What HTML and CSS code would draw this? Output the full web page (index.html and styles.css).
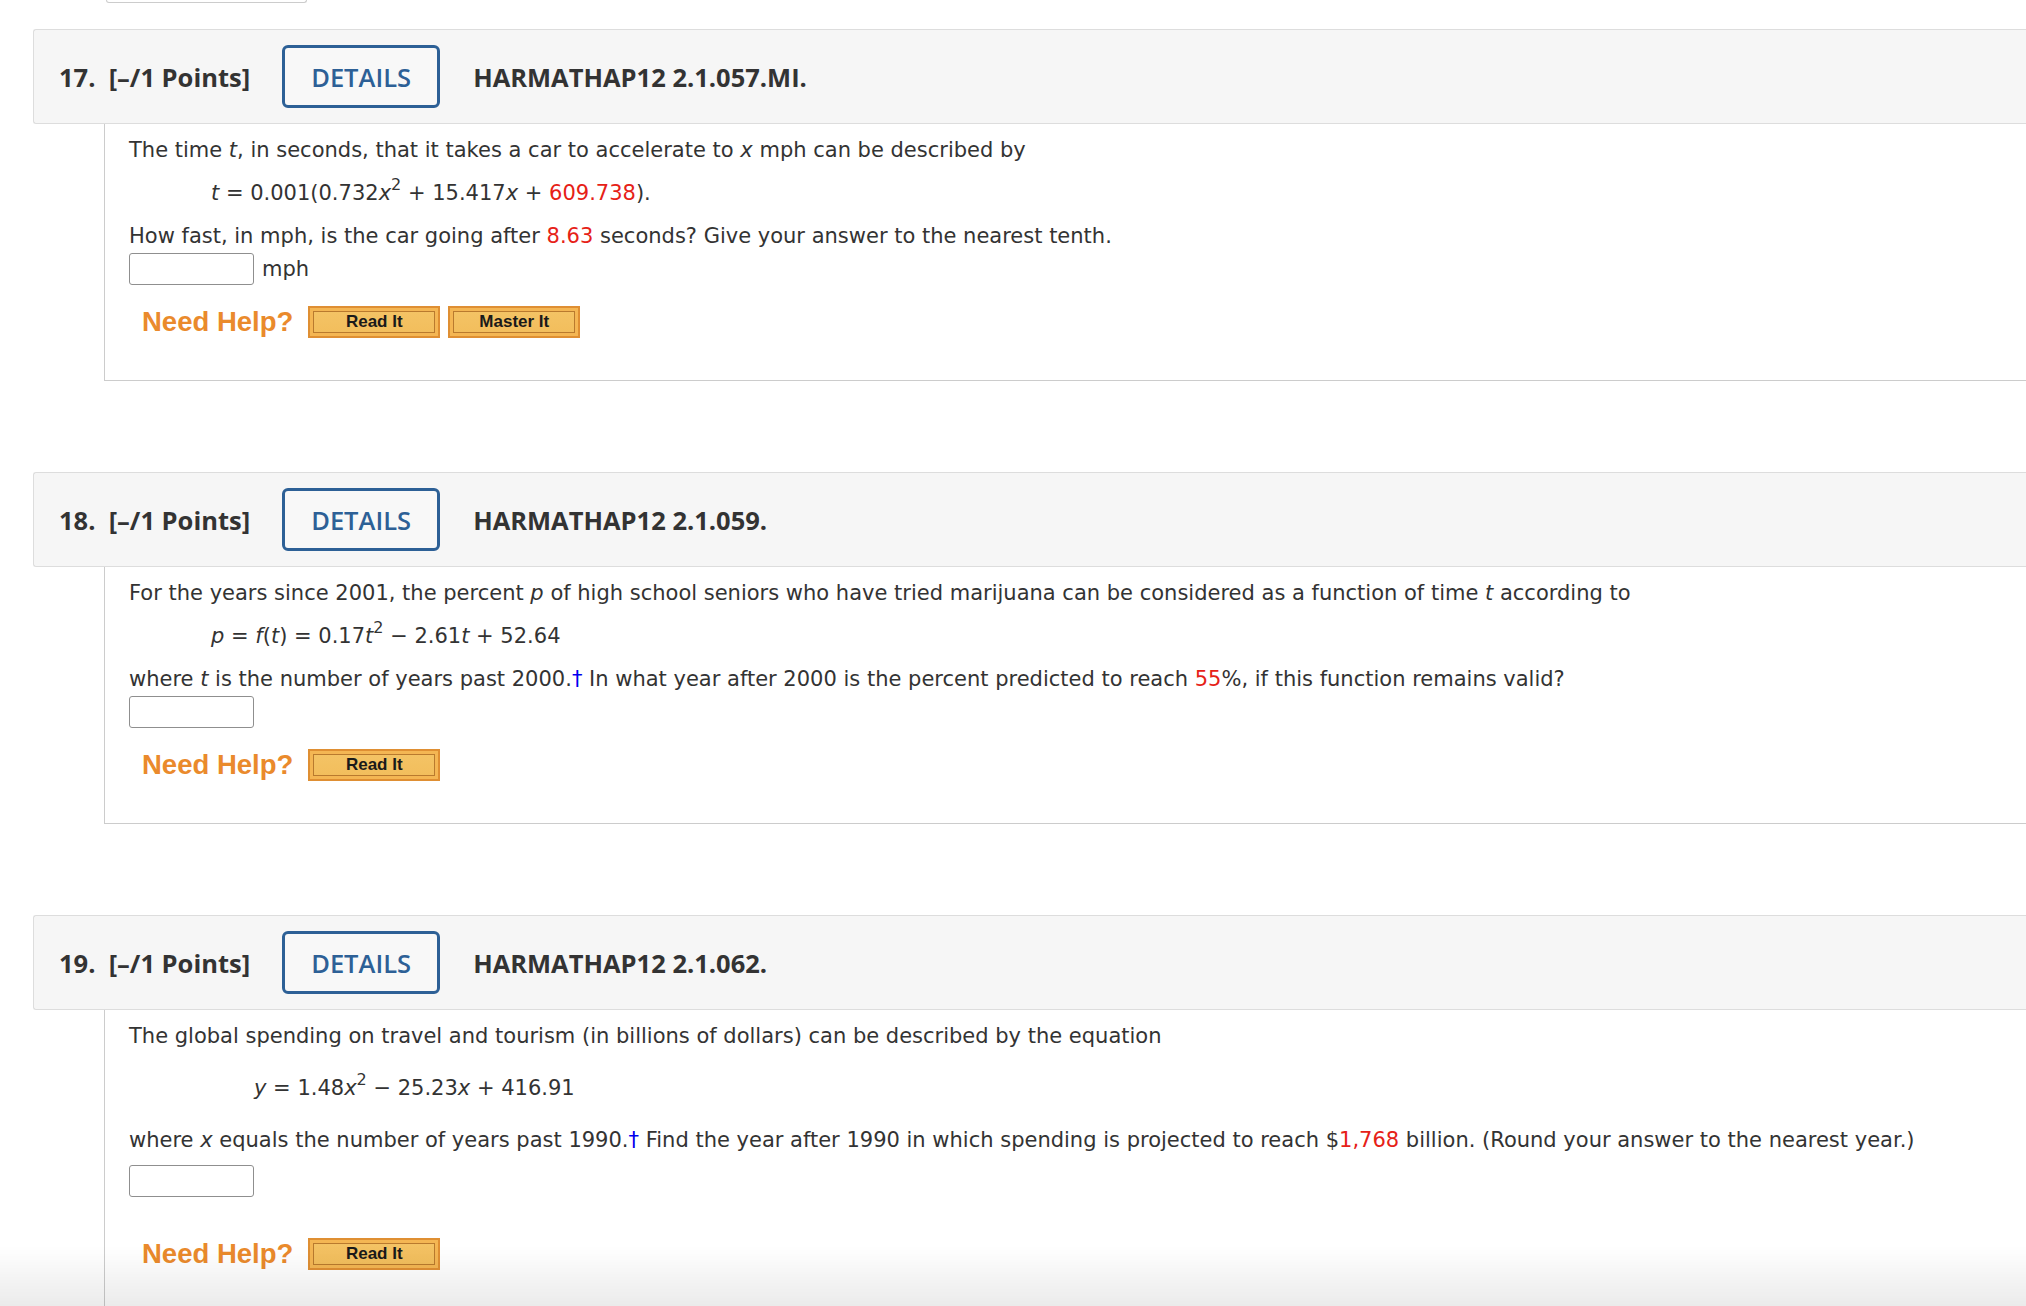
FILE: index.html
```html
<!DOCTYPE html>
<html>
<head>
<meta charset="utf-8">
<link rel="stylesheet" href="styles.css">
</head>
<body>
<div class="stub"></div>

<div class="question">
  <div class="qhead">
    <span class="qnum">17.&nbsp; [–/1 Points]</span>
    <span class="details">DETAILS</span>
    <span class="qcode">HARMATHAP12 2.1.057.MI.</span>
  </div>
  <div class="qbody">
    <p class="line">The time <i>t</i>, in seconds, that it takes a car to accelerate to <i>x</i> mph can be described by</p>
    <p class="line eq"><i>t</i> = 0.001(0.732<i>x</i><sup>2</sup> + 15.417<i>x</i> + <span class="red">609.738</span>).</p>
    <p class="line">How fast, in mph, is the car going after <span class="red">8.63</span> seconds? Give your answer to the nearest tenth.</p>
    <div class="answer"><span class="inbox"></span><span class="unit">mph</span></div>
    <div class="help">
      <span class="needhelp">Need Help?</span>
      <span class="hbtn">Read It</span>
      <span class="hbtn">Master It</span>
    </div>
  </div>
</div>

<div class="question">
  <div class="qhead">
    <span class="qnum">18.&nbsp; [–/1 Points]</span>
    <span class="details">DETAILS</span>
    <span class="qcode">HARMATHAP12 2.1.059.</span>
  </div>
  <div class="qbody">
    <p class="line">For the years since 2001, the percent <i>p</i> of high school seniors who have tried marijuana can be considered as a function of time <i>t</i> according to</p>
    <p class="line eq"><i>p</i> = <i>f</i>(<i>t</i>) = 0.17<i>t</i><sup>2</sup> − 2.61<i>t</i> + 52.64</p>
    <p class="line">where <i>t</i> is the number of years past 2000.<span class="dagger">†</span> In what year after 2000 is the percent predicted to reach <span class="red">55</span>%, if this function remains valid?</p>
    <div class="answer"><span class="inbox"></span></div>
    <div class="help">
      <span class="needhelp">Need Help?</span>
      <span class="hbtn">Read It</span>
    </div>
  </div>
</div>

<div class="question">
  <div class="qhead">
    <span class="qnum">19.&nbsp; [–/1 Points]</span>
    <span class="details">DETAILS</span>
    <span class="qcode">HARMATHAP12 2.1.062.</span>
  </div>
  <div class="qbody wide">
    <p class="line">The global spending on travel and tourism (in billions of dollars) can be described by the equation</p>
    <p class="line eq eq-deep"><i>y</i> = 1.48<i>x</i><sup>2</sup> − 25.23<i>x</i> + 416.91</p>
    <p class="line">where <i>x</i> equals the number of years past 1990.<span class="dagger">†</span> Find the year after 1990 in which spending is projected to reach $<span class="red">1,768</span> billion. (Round your answer to the nearest year.)</p>
    <div class="answer"><span class="inbox"></span></div>
    <div class="help">
      <span class="needhelp">Need Help?</span>
      <span class="hbtn">Read It</span>
    </div>
  </div>
</div>

<div class="fade"></div>
</body>
</html>
```

FILE: styles.css
```css
html, body {
  margin: 0;
  padding: 0;
  background: #ffffff;
  overflow: hidden;
}
body {
  font-family: "DejaVu Sans", Verdana, sans-serif;
  color: #333333;
  width: 2026px;
  height: 1306px;
}
.stub {
  margin-left: 106px;
  width: 199px;
  height: 2px;
  border: 1px solid #cccccc;
  border-top: 0;
  border-radius: 0 0 5px 5px;
}
.question {
  margin-left: 33px;
  margin-top: 91px;
}
.stub + .question {
  margin-top: 26px;
}
.qhead {
  display: flex;
  align-items: center;
  height: 93px;
  background: #f6f6f6;
  border: 1px solid #dddddd;
  border-right: 0;
  border-radius: 3px 0 0 3px;
  padding-left: 25px;
  font-family: "Open Sans", "DejaVu Sans", sans-serif;
  font-weight: 700;
  font-size: 25.5px;
  color: #333333;
}
.qnum {
  white-space: pre;
}
.details {
  box-sizing: border-box;
  width: 158px;
  height: 63px;
  margin-left: 32px;
  margin-right: 33px;
  border: 3px solid #2d6096;
  border-radius: 6px;
  display: flex;
  align-items: center;
  justify-content: center;
  color: #2d6096;
  font-weight: 600;
  font-size: 25.5px;
  background: #f8f8f8;
}
.qbody {
  margin-left: 71px;
  border-left: 1px solid #cccccc;
  border-bottom: 1px solid #cccccc;
  padding: 11px 0 42px 24px;
}
.line {
  margin: 0 0 13px 0;
  font-size: 21px;
  line-height: 30px;
}
.line i {
  font-style: italic;
}
.eq {
  padding-left: 82px;
}
.wide .line {
  margin-bottom: 22px;
}
.wide .eq-deep {
  padding-left: 125px;
}
sup {
  font-size: 16px;
  line-height: 0;
  vertical-align: 10px;
}
.red {
  color: #e62117;
}
.dagger {
  color: #0000ee;
}
.answer {
  display: flex;
  align-items: center;
  margin-top: -11px;
  height: 32px;
  font-size: 21px;
}
.wide .answer {
  margin-top: -12px;
}
.inbox {
  box-sizing: border-box;
  width: 125px;
  height: 32px;
  border: 1px solid #8f8f8f;
  border-radius: 3px;
  background: #ffffff;
}
.unit {
  margin-left: 8px;
}
.help {
  display: flex;
  align-items: center;
  margin-top: 21px;
  padding-left: 13px;
}
.wide .help {
  margin-top: 41px;
}
.needhelp {
  font-family: "Liberation Sans", Arial, sans-serif;
  font-weight: 700;
  font-size: 27.5px;
  color: #ea8a2c;
  margin-right: 15px;
}
.hbtn {
  box-sizing: border-box;
  width: 132px;
  height: 32px;
  margin-right: 8px;
  border: 2px solid #df8f33;
  box-shadow: inset 0 0 0 3px #f4b653, inset 0 0 0 4px #b97a2e;
  display: flex;
  align-items: center;
  justify-content: center;
  font-family: "Liberation Sans", Arial, sans-serif;
  font-weight: 700;
  font-size: 17px;
  color: #1a1a1a;
  background-color: #f2bd5b;
  background-image: linear-gradient(#f4c466, #f2bd5b);
}
.fade {
  position: fixed;
  left: 0;
  right: 0;
  bottom: 0;
  height: 60px;
  background: linear-gradient(rgba(0,0,0,0), rgba(0,0,0,0.08));
  pointer-events: none;
}
```
